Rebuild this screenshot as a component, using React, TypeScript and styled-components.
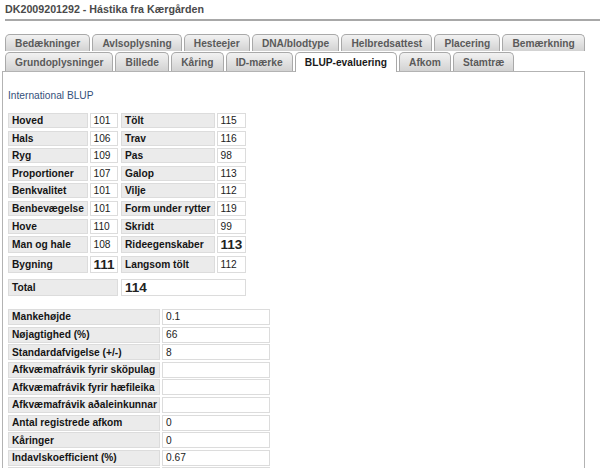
import React from "react";
import styled, { createGlobalStyle, css } from "styled-components";

const GlobalStyle = createGlobalStyle`
  html, body {
    margin: 0;
    background: #fff;
  }
  body {
    font-family: "Liberation Sans", Arial, Helvetica, sans-serif;
    font-size: 10.2px;
    color: #222;
    overflow: hidden;
  }
`;

const Page = styled.div`
  width: 600px;
`;

const Title = styled.h1`
  margin: 0 0 0 5px;
  padding: 3px 0 3px;
  font-size: 10.7px;
  line-height: 13px;
  font-weight: bold;
  color: #4a4a4a;
  border-bottom: 2px solid #a8a8a8;
`;

const TabBar = styled.div`
  margin: 13px 0 0 5px;
  display: flex;
  flex-direction: column;
`;

const TabRow = styled.div<{ $height: number }>`
  display: flex;
  gap: 2px;
  height: ${(p) => p.$height}px;
  align-items: flex-end;
`;

const Tab = styled.div<{ $active?: boolean; $height: number }>`
  box-sizing: border-box;
  height: ${(p) => p.$height}px;
  padding: 0 9.1px;
  display: flex;
  align-items: center;
  justify-content: center;
  font-weight: bold;
  font-size: 10.2px;
  white-space: nowrap;
  border: 1px solid #a9a9a9;
  border-bottom: none;
  border-radius: 5px 5px 0 0;
  color: #5a5a5a;
  background: linear-gradient(#f2f2f2, #d2d2d2);
  ${(p) =>
    p.$active &&
    css`
      background: #fff;
      color: #1a1a1a;
      position: relative;
      z-index: 1;
      height: ${p.$height + 1}px;
      margin-bottom: -1px;
    `}
`;

const Panel = styled.div`
  margin-left: 2px;
  width: 583px;
  min-height: 460px;
  box-sizing: border-box;
  border: 1px solid #b3b3b3;
  padding: 17px 0 0 5px;
`;

const Heading = styled.div`
  color: #34507a;
  line-height: 13px;
  margin-bottom: 11px;
`;

const BlupGrid = styled.div`
  display: grid;
  grid-template-columns: 80px 28px 96px 29px;
  column-gap: 1.5px;
  row-gap: 2.6px;
  width: max-content;
`;

const Cell = styled.div<{ $label?: boolean; $big?: boolean; $shift?: boolean; $span?: boolean }>`
  box-sizing: border-box;
  min-height: 15px;
  display: flex;
  align-items: center;
  padding: 0 3px;
  border: 1px solid #dcdcdc;
  line-height: 13px;
  white-space: nowrap;
  overflow: hidden;
  background: ${(p) => (p.$label ? "#ebebeb" : "#fff")};
  font-weight: ${(p) => (p.$label || p.$big ? "bold" : "normal")};
  font-size: ${(p) => (p.$big ? "13.5px" : "10.2px")};
  color: ${(p) => (p.$label ? "#151515" : "#222")};
  ${(p) => p.$shift && "margin-left: 2px;"}
  ${(p) => p.$span && "grid-column: span 2;"}
  ${(p) => p.$big && "min-height: 17px;"}
`;

const TotalRow = styled.div`
  display: contents;
`;

const Spacer = styled.div`
  grid-column: 1 / -1;
  height: 1px;
`;

const InfoGrid = styled.div`
  display: grid;
  grid-template-columns: 152px 108px;
  column-gap: 2px;
  row-gap: 1.6px;
  margin-top: 13px;
  width: max-content;
`;

const InfoCell = styled.div<{ $label?: boolean }>`
  box-sizing: border-box;
  height: 16px;
  display: flex;
  align-items: center;
  padding: 0 3px;
  border: 1px solid #dcdcdc;
  background: ${(p) => (p.$label ? "#ebebeb" : "#fff")};
  font-weight: ${(p) => (p.$label ? "bold" : "normal")};
  color: ${(p) => (p.$label ? "#151515" : "#222")};
  white-space: nowrap;
  overflow: hidden;
`;

const row1 = ["Bedækninger", "Avlsoplysning", "Hesteejer", "DNA/blodtype", "Helbredsattest", "Placering", "Bemærkning"];
const row2 = ["Grundoplysninger", "Billede", "Kåring", "ID-mærke", "BLUP-evaluering", "Afkom", "Stamtræ"];

type Pair = [string, string, boolean?];
const blup: [Pair, Pair][] = [
  [["Hoved", "101"], ["Tölt", "115"]],
  [["Hals", "106"], ["Trav", "116"]],
  [["Ryg", "109"], ["Pas", "98"]],
  [["Proportioner", "107"], ["Galop", "113"]],
  [["Benkvalitet", "101"], ["Vilje", "112"]],
  [["Benbevægelse", "101"], ["Form under rytter", "119"]],
  [["Hove", "110"], ["Skridt", "99"]],
  [["Man og hale", "108"], ["Rideegenskaber", "113", true]],
  [["Bygning", "111", true], ["Langsom tölt", "112"]],
];

const info: [string, string][] = [
  ["Mankehøjde", "0.1"],
  ["Nøjagtighed (%)", "66"],
  ["Standardafvigelse (+/-)", "8"],
  ["Afkvæmafrávik fyrir sköpulag", ""],
  ["Afkvæmafrávik fyrir hæfileika", ""],
  ["Afkvæmafrávik aðaleinkunnar", ""],
  ["Antal registrede afkom", "0"],
  ["Kåringer", "0"],
  ["Indavlskoefficient (%)", "0.67"],
  ["", ""],
];

export default function App() {
  return (
    <Page>
      <GlobalStyle />
      <Title>DK2009201292 - Hástika fra Kærgården</Title>
      <TabBar>
        <TabRow $height={17}>
          {row1.map((t) => (
            <Tab key={t} $height={17}>
              {t}
            </Tab>
          ))}
        </TabRow>
        <TabRow $height={20}>
          {row2.map((t) => (
            <Tab key={t} $height={19} $active={t === "BLUP-evaluering"}>
              {t}
            </Tab>
          ))}
        </TabRow>
      </TabBar>
      <Panel>
        <Heading>International BLUP</Heading>
        <BlupGrid>
          {blup.map(([a, b]) => (
            <React.Fragment key={a[0]}>
              <Cell $label>{a[0]}</Cell>
              <Cell $big={a[2]}>{a[1]}</Cell>
              <Cell $label $shift>
                {b[0]}
              </Cell>
              <Cell $big={b[2]}>{b[1]}</Cell>
            </React.Fragment>
          ))}
          <Spacer />
          <TotalRow>
            <Cell $label $span>
              Total
            </Cell>
            <Cell $big $span $shift>
              114
            </Cell>
          </TotalRow>
        </BlupGrid>
        <InfoGrid>
          {info.map(([k, v], i) => (
            <React.Fragment key={i}>
              <InfoCell $label>{k}</InfoCell>
              <InfoCell>{v}</InfoCell>
            </React.Fragment>
          ))}
        </InfoGrid>
      </Panel>
    </Page>
  );
}
